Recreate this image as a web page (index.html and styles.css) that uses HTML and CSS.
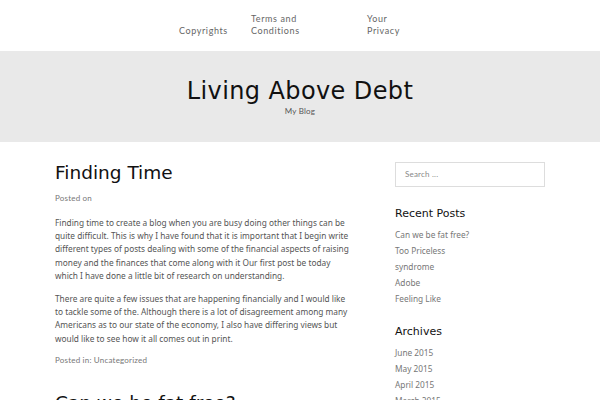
FILE: index.html
```html
<!DOCTYPE html>
<html>
<head>
<meta charset="utf-8">
<link rel="stylesheet" href="styles.css">
</head>
<body>
<nav class="topnav">
  <ul class="menu">
    <li class="item item-a"><a href="#">Copyrights</a></li>
    <li class="item item-b"><a href="#">Terms and Conditions</a></li>
    <li class="item item-c"><a href="#">Your Privacy</a></li>
  </ul>
</nav>
<header class="masthead">
  <h1 class="site-title">Living Above Debt</h1>
  <p class="tagline">My Blog</p>
</header>
<div class="wrap">
  <main class="content">
    <article class="post">
      <h2 class="post-title">Finding Time</h2>
      <div class="meta">Posted on</div>
      <p>Finding time to create a blog when you are busy doing other things can be quite difficult. This is why I have found that it is important that I begin write different types of posts dealing with some of the financial aspects of raising money and the finances that come along with it Our first post be today which I have done a little bit of research on understanding.</p>
      <p>There are quite a few issues that are happening financially and I would like to tackle some of the. Although there is a lot of disagreement among many Americans as to our state of the economy, I also have differing views but would like to see how it all comes out in print.</p>
      <div class="meta">Posted in: <a href="#">Uncategorized</a></div>
    </article>
    <article class="post">
      <h2 class="post-title">Can we be fat free?</h2>
    </article>
  </main>
  <aside class="sidebar">
    <div class="search">Search ...</div>
    <section class="widget">
      <h3 class="widget-title">Recent Posts</h3>
      <ul class="links">
        <li><a href="#">Can we be fat free?</a></li>
        <li><a href="#">Too Priceless</a></li>
        <li><a href="#">syndrome</a></li>
        <li><a href="#">Adobe</a></li>
        <li><a href="#">Feeling Like</a></li>
      </ul>
    </section>
    <section class="widget">
      <h3 class="widget-title">Archives</h3>
      <ul class="links">
        <li><a href="#">June 2015</a></li>
        <li><a href="#">May 2015</a></li>
        <li><a href="#">April 2015</a></li>
        <li><a href="#">March 2015</a></li>
      </ul>
    </section>
  </aside>
</div>
</body>
</html>
```
FILE: styles.css
```css
* { box-sizing: border-box; }
html, body { margin: 0; padding: 0; background: #fff; }
body {
  font-family: "Lato", sans-serif;
  font-size: 9px;
  color: #555;
  overflow: hidden;
  height: 400px;
}
a { color: inherit; text-decoration: none; }

.topnav { height: 51px; display: flex; align-items: flex-end; }
.menu {
  list-style: none;
  margin: 0;
  padding: 0 14px 14px 0;
  width: 100%;
  display: flex;
  justify-content: center;
  align-items: flex-end;
  gap: 24px;
}
.item { font-size: 9px; line-height: 12px; letter-spacing: 0.6px; color: #666; }
.item-a { width: 48px; }
.item-b { width: 92px; }
.item-b a, .item-c a { display: block; }
.item-b a { width: 60px; }
.item-c { width: 40px; }

.masthead {
  background: #e9e9e9;
  height: 91px;
  text-align: center;
  padding-top: 26px;
}
.site-title {
  margin: 0;
  font-family: "DejaVu Sans", sans-serif;
  font-weight: normal;
  font-size: 24px;
  line-height: 28px;
  letter-spacing: 0.4px;
  color: #111;
}
.tagline { margin: 0; font-size: 8px; line-height: 12px; color: #555; letter-spacing: 0.2px; }

.wrap {
  display: flex;
  padding: 0 55px;
  gap: 43px;
}
.content { width: 297px; padding-top: 20px; }
.post-title {
  margin: 0;
  font-family: "DejaVu Sans", sans-serif;
  font-weight: normal;
  font-size: 18.5px;
  line-height: 22px;
  color: #111;
}
.meta { font-size: 8px; line-height: 12px; color: #777; margin-top: 8px; letter-spacing: 0.2px; }
.post p {
  margin: 10px 0 0;
  font-family: "Noto Sans", sans-serif;
  font-size: 8.3px;
  line-height: 13.2px;
}
.post p:first-of-type { margin-top: 12px; }
.post p + .meta { margin-top: 9px; }
.post + .post { margin-top: 26px; }

.sidebar { width: 150px; padding-top: 20px; }
.search {
  height: 25px;
  border: 1px solid #ddd;
  padding: 0 9px;
  line-height: 23px;
  font-size: 8px;
  color: #888;
  letter-spacing: 0.2px;
}
.widget { margin-top: 20px; }
.widget + .widget { margin-top: 18px; }
.widget-title {
  margin: 0;
  font-family: "DejaVu Sans", sans-serif;
  font-weight: normal;
  font-size: 11px;
  line-height: 14px;
  color: #111;
}
.links { list-style: none; margin: 6px 0 0; padding: 0; }
.links li {
  font-family: "Noto Sans", sans-serif;
  font-size: 8.3px;
  line-height: 16px;
  color: #777;
}
```
